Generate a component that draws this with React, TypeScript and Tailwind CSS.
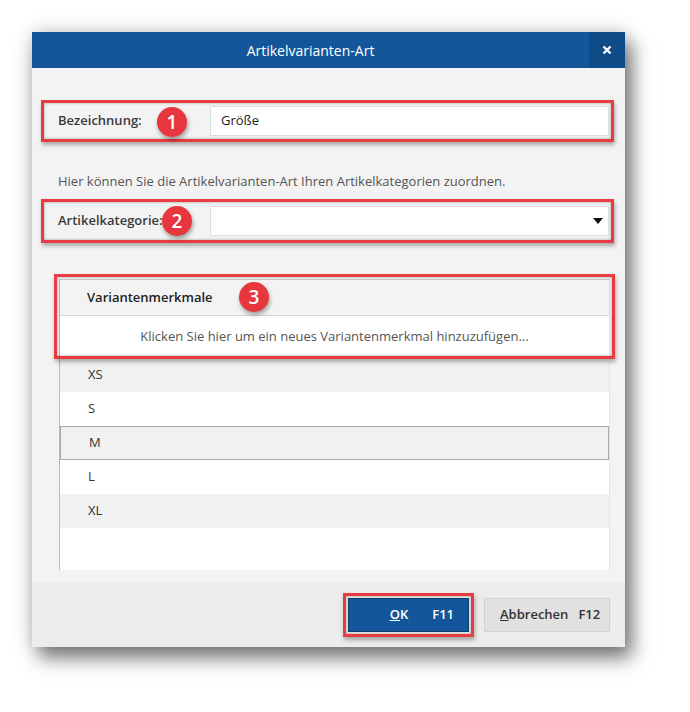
const font = { fontFamily: '"Open Sans", "Noto Sans", sans-serif' };

function Badge({ n, className }: { n: number; className: string }) {
  return (
    <div
      className={
        "absolute flex h-[30px] w-[30px] items-center justify-center rounded-full bg-[#e8363e] text-[19px] font-semibold leading-none text-white shadow-[1px_3px_4px_rgba(0,0,0,0.35)] " +
        className
      }
    >
      {n}
    </div>
  );
}

const redBox =
  "border-[3px] border-[#ea3a42] shadow-[inset_0_0_3px_rgba(0,0,0,0.35),1px_3px_4px_rgba(0,0,0,0.3)]";

const sizes = ["XS", "S", "M", "L", "XL"];

export default function App() {
  return (
    <div className="h-[712px] w-[690px] bg-white pl-[32px] pt-[32px]" style={font}>
      <div className="flex h-[615px] w-[593px] flex-col shadow-[0_0_18px_rgba(0,0,0,0.18),7px_11px_18px_rgba(0,0,0,0.5)]">
        {/* Titelleiste */}
        <div className="flex h-[36px] bg-[#13579a]">
          <div className="flex flex-1 items-center justify-center text-[14px] text-white">
            Artikelvarianten-Art
          </div>
          <div className="flex w-[36px] items-center justify-center bg-[#0f4b87]">
            <svg width="10" height="10" viewBox="0 0 10 10">
              <path d="M1.5 1.5 L8.5 8.5 M8.5 1.5 L1.5 8.5" stroke="white" strokeWidth="2.4" />
            </svg>
          </div>
        </div>

        {/* Inhalt */}
        <div className="flex flex-1 flex-col bg-[#f3f3f3] pl-[9px] pr-[11px] pt-[32px]">
          <div className={"relative flex h-[42px] items-center pl-[14px] pr-[2px] " + redBox}>
            <div className="w-[152px] text-[13px] font-semibold text-[#3a3a3a]">Bezeichnung:</div>
            <div className="flex h-[30px] flex-1 items-center border border-[#dcdcdc] bg-white pl-[10px] text-[13px] text-[#222]">
              Größe
            </div>
            <Badge n={1} className="left-[113px] top-[4px]" />
          </div>

          <div className="ml-[17px] mt-[30px] h-[18px] text-[13px] leading-[18px] text-[#555]">
            Hier können Sie die Artikelvarianten-Art Ihren Artikelkategorien zuordnen.
          </div>

          <div className={"relative mt-[9px] flex h-[44px] items-center pl-[14px] pr-[2px] " + redBox}>
            <div className="w-[152px] text-[13px] font-semibold text-[#3a3a3a]">Artikelkategorie:</div>
            <div className="flex h-[30px] flex-1 items-center justify-end border border-[#dcdcdc] bg-white pr-[5px]">
              <svg width="10" height="6" viewBox="0 0 10 6">
                <path d="M0 0 H10 L5 6 Z" fill="#111" />
              </svg>
            </div>
            <Badge n={2} className="left-[118px] top-[4px]" />
          </div>

          {/* Tabelle */}
          <div className="relative ml-[18px] mt-[36px] flex h-[291px] w-[551px] flex-col border-l border-r border-t border-l-[#b8b8b8] border-r-[#e4e4e4] border-t-[#c4c4c4] text-[13px] text-[#333]">
            <div className="flex h-[36px] items-center border-b border-[#d6d6d6] bg-[#f3f3f3] pl-[27px] font-semibold text-[#222]">
              Variantenmerkmale
            </div>
            <div className="flex h-[42px] items-center justify-center bg-white text-[#555]">
              Klicken Sie hier um ein neues Variantenmerkmal hinzuzufügen...
            </div>
            {sizes.map((s, i) => (
              <div
                key={s}
                className={
                  "flex h-[34px] items-center pl-[28px] " +
                  (s === "M"
                    ? "border border-[#a8a8a8] bg-[#f1f1f1] pl-[27px]"
                    : i % 2 === 0
                      ? "bg-[#f1f1f1]"
                      : "bg-white")
                }
              >
                {s}
              </div>
            ))}
            <div className="flex-1 bg-white" />

            <div className={"absolute -left-[6px] -right-[6px] -top-[6px] h-[85px] " + redBox} />
            <Badge n={3} className="left-[179px] top-[2px]" />
          </div>
        </div>

        {/* Fußleiste */}
        <div className="flex h-[65px] items-center justify-end bg-[#ececec] pr-[15px] text-[13px] font-semibold">
          <div className={"p-[2px] " + redBox}>
            <div className="flex h-[34px] w-[121px] items-center justify-end gap-[24px] border border-[#0c3e70] bg-[#13579a] pr-[14px] text-white">
              <span>
                <span className="underline">O</span>K
              </span>
              <span>F11</span>
            </div>
          </div>
          <div className="ml-[10px] flex h-[34px] w-[126px] items-center gap-[10px] border border-[#d2d2d2] bg-[#e1e1e1] pl-[15px] text-[#333]">
            <span>
              <span className="underline">A</span>bbrechen
            </span>
            <span>F12</span>
          </div>
        </div>
      </div>
    </div>
  );
}
